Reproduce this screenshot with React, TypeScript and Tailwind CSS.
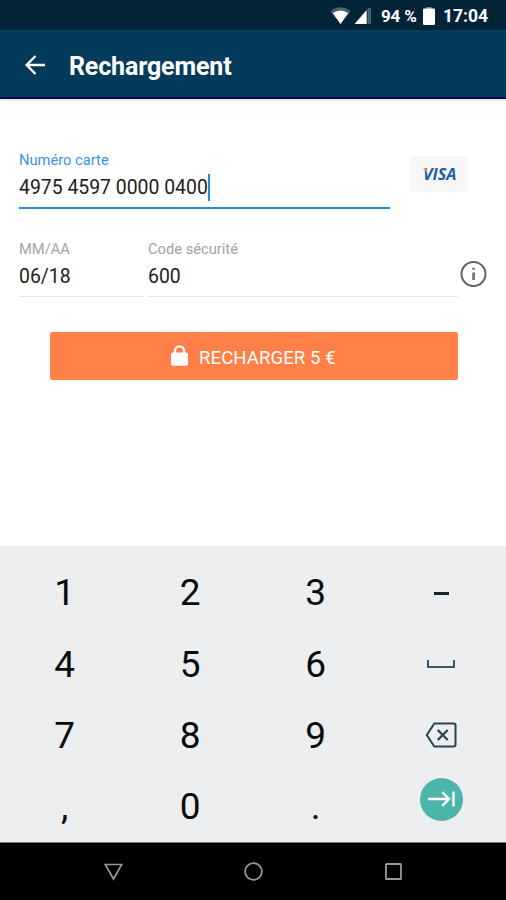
import React from "react";

function StatusBar() {
  return (
    <div className="flex h-[30px] items-center justify-end bg-[#032337] pr-[18px] text-white">
      <svg className="mt-[2px] h-[18px] w-[21px]" viewBox="0 0 21 18">
        <path d="M0.3 4.2 Q10.5 -3.8 20.7 4.2 L10.5 17 Z" fill="#49626f" />
        <path d="M2.8 6 Q10.5 0.8 18.2 6 L10.5 17 Z" fill="#fff" />
      </svg>
      <svg className="ml-[3px] mt-[2px] h-[18px] w-[18px]" viewBox="0 0 18 18">
        <path d="M13.5 1h3.5v16h-3.5z" fill="#49626f" />
        <path d="M12.7 3V17H0.5L12.7 3Z" fill="#fff" />
      </svg>
      <span className="ml-[9px] mt-[2px] w-[38px] whitespace-nowrap text-[17px] font-bold leading-5 tracking-[-0.2px]">94 %</span>
      <svg className="ml-[4px] mt-[2px] h-[18px] w-[12px]" viewBox="0 0 12 18">
        <path d="M3.5 0h5v2h-5z" fill="#829099" />
        <rect y="1.6" width="12" height="16.4" rx="1.3" fill="#fff" />
      </svg>
      <span className="ml-[8px] mt-[2px] w-[45px] whitespace-nowrap text-[17.5px] font-bold leading-5">17:04</span>
    </div>
  );
}

function Header() {
  return (
    <header className="relative flex h-[69px] items-center border-b-2 border-[#100b45] bg-[#053b5a] pl-[25px] shadow-[0_1px_3px_rgba(0,0,0,0.18)]">
      <svg className="mt-[2px] h-[20px] w-[20px]" viewBox="0 0 20 20" fill="none" stroke="#fff" strokeWidth="2.3">
        <path d="M20 10H2M10.5 1L1.6 10L10.5 19" />
      </svg>
      <h1 className="ml-[24px] mt-[6px] text-[25px] font-bold leading-8 tracking-[-0.15px] text-white">Rechargement</h1>
    </header>
  );
}

function CardForm() {
  return (
    <main className="h-[447px] bg-white pt-[52px]">
      <div className="flex pl-[19px]">
        <div className="h-[58px] w-[371px] border-b-2 border-[#258be0]">
          <div className="text-[14.7px] leading-[19px] text-[#3995e5]">Numéro carte</div>
          <div className="mt-[3px] flex h-[28px] items-center text-[19.4px] text-[#202020]">
            <span className="mt-[2px]">4975 4597 0000 0400</span>
            <span className="h-[27px] w-[2px] bg-[#258be0]" />
          </div>
        </div>
        <div className="ml-[20px] mt-[5px] flex h-[36px] w-[58px] items-center justify-center bg-[#f7f7f8]">
          <svg className="h-[28px] w-[42px]" viewBox="0 0 42 28">
            <text x="5" y="20" fontFamily="Open Sans" fontSize="15.5" fontWeight="700" fontStyle="italic" textLength="33.5" lengthAdjust="spacingAndGlyphs" fill="#1c5ea8">VISA</text>
            <path d="M4.5 8.5H8.6L9.2 13.5Q7.6 10 4.5 8.5Z" fill="#f2a63f" />
          </svg>
        </div>
      </div>
      <div className="mt-[31px] flex pl-[19px]">
        <div className="h-[57px] w-[124px] border-b border-[#e4e4e4]">
          <div className="text-[14.7px] leading-[19px] text-[#a3a3a3]">MM/AA</div>
          <div className="mt-[4px] flex h-[28px] items-center text-[19.4px] text-[#202020]">06/18</div>
        </div>
        <div className="ml-[5px] h-[57px] w-[310px] border-b border-[#e4e4e4]">
          <div className="text-[14.7px] leading-[19px] text-[#a3a3a3]">Code sécurité</div>
          <div className="mt-[4px] flex h-[28px] items-center text-[19.4px] text-[#202020]">600</div>
        </div>
        <svg className="ml-[2px] mt-[20px] h-[27px] w-[27px]" viewBox="0 0 27 27">
          <circle cx="13.5" cy="14" r="12" fill="none" stroke="#626262" strokeWidth="2" />
          <path d="M12.2 7.7h2.8v2h-2.8zM12.2 12.5h2.8v7.5h-2.8z" fill="#777" />
        </svg>
      </div>
      <button className="ml-[50px] mt-[35px] flex h-[48px] w-[408px] items-center rounded-[2px] bg-[#ff8049] pl-[121px] text-[18.5px] text-white">
        <svg className="mb-[2px] h-[21px] w-[17px]" viewBox="0 0 17 21">
          <path d="M3.9 8V6a4.6 4.6 0 0 1 9.2 0V8" fill="none" stroke="#fff" strokeWidth="2.4" />
          <rect y="7.5" width="17" height="13.3" rx="1.8" fill="#fff" />
        </svg>
        <span className="ml-[11px] mt-[5px] whitespace-nowrap tracking-[0.12px]">RECHARGER 5 €</span>
      </button>
    </main>
  );
}

function Key({ children }: { children: React.ReactNode }) {
  return <div className="flex h-full items-center justify-center">{children}</div>;
}

function Keypad() {
  return (
    <section className="grid h-[296px] grid-cols-[125.5px_125.5px_125.5px_125.5px] grid-rows-[71.4px_71.4px_71.4px_71.4px] bg-[#eceef0] pl-[2px] pt-[11px] text-[37px] leading-none text-[#080b0d]">
      <Key>1</Key>
      <Key>2</Key>
      <Key>3</Key>
      <Key><span className="mt-px h-[3px] w-[15px] bg-[#15272d]" /></Key>
      <Key>4</Key>
      <Key>5</Key>
      <Key>6</Key>
      <Key><span className="mb-px h-[8px] w-[28px] border-x-2 border-b-2 border-[#365768]" /></Key>
      <Key>7</Key>
      <Key>8</Key>
      <Key>9</Key>
      <Key>
        <svg className="h-[26px] w-[32px]" viewBox="0 0 32 26" fill="none" stroke="#244655" strokeWidth="2">
          <path d="M9.3 1.5H28.5a2 2 0 0 1 2 2V22.5a2 2 0 0 1-2 2H9.3L1.8 13Z" />
          <path d="M12.7 8L22.7 18M22.7 8L12.7 18" strokeWidth="2.4" />
        </svg>
      </Key>
      <Key>,</Key>
      <Key>0</Key>
      <Key>.</Key>
      <Key>
        <div className="mb-[15px] flex h-[43px] w-[43px] items-center justify-center rounded-full bg-[#4ab5a8]">
          <svg className="h-[16px] w-[27px]" viewBox="0 0 27 16" fill="none" stroke="#fff" strokeWidth="2.4">
            <path d="M0 8H20.5M14.3 1.2L21 8L14.3 14.8M25.5 0.5V15.5" />
          </svg>
        </div>
      </Key>
    </section>
  );
}

function NavBar() {
  return (
    <nav className="flex h-[58px] items-center border-t border-[#777] bg-black pl-[104px]">
      <svg className="h-[18px] w-[19px]" viewBox="0 0 19 18" fill="none" stroke="#989898" strokeWidth="1.7">
        <path d="M1.2 1.5H17.8L9.5 16Z" />
      </svg>
      <svg className="ml-[121px] h-[19px] w-[19px]" viewBox="0 0 19 19" fill="none" stroke="#989898" strokeWidth="1.8">
        <circle cx="9.5" cy="9.5" r="8.4" />
      </svg>
      <svg className="mb-px ml-[122px] h-[17px] w-[17px]" viewBox="0 0 17 17" fill="none" stroke="#989898" strokeWidth="1.8">
        <rect x="1" y="1" width="15" height="15" rx="0.6" />
      </svg>
    </nav>
  );
}

export default function App() {
  return (
    <div className="h-[900px] w-[506px] overflow-hidden bg-white font-['Roboto',sans-serif]">
      <StatusBar />
      <Header />
      <CardForm />
      <Keypad />
      <NavBar />
    </div>
  );
}
